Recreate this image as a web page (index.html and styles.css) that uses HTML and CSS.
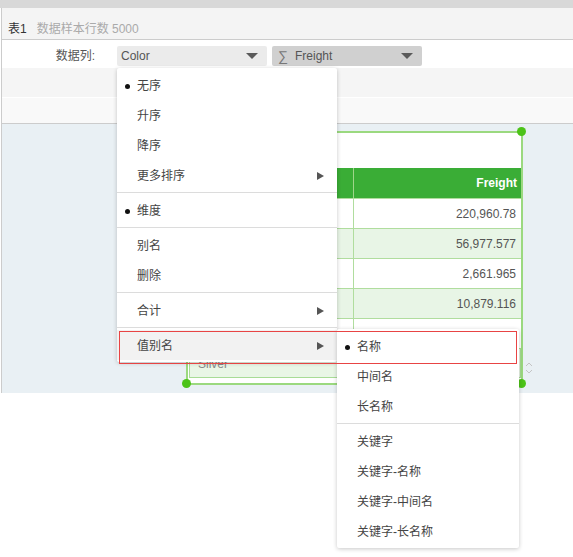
FILE: index.html
```html
<!DOCTYPE html>
<html>
<head>
<meta charset="utf-8">
<link rel="stylesheet" href="styles.css">
</head>
<body>
<div class="topbar"></div>
<div class="panel">
  <div class="tabbar"><span class="tab-name">表1</span><span class="tab-info">数据样本行数 5000</span></div>
  <div class="toolbar">
    <span class="tool-label">数据列:</span>
    <div class="select select-light"><span class="select-text">Color</span><span class="caret"></span></div>
    <div class="select select-dark"><span class="sigma">∑</span><span class="select-text">Freight</span><span class="caret"></span></div>
  </div>
  <div class="strip strip-a"></div>
  <div class="strip strip-b"></div>
  <div class="canvas">
    <div class="widget">
      <div class="widget-title"></div>
      <div class="grid">
        <div class="row head"><div class="cell c1">Color</div><div class="cell c2">Freight</div></div>
        <div class="row"><div class="cell c1">Black</div><div class="cell c2">220,960.78</div></div>
        <div class="row alt"><div class="cell c1">Blue</div><div class="cell c2">56,977.577</div></div>
        <div class="row"><div class="cell c1">Multi</div><div class="cell c2">2,661.965</div></div>
        <div class="row alt"><div class="cell c1">Red</div><div class="cell c2">10,879.116</div></div>
        <div class="row"><div class="cell c1">Grey</div><div class="cell c2">133,100.000</div></div>
        <div class="row selected"><div class="cell c1">Silver</div><div class="cell c2"></div></div>
      </div>
      <span class="handle h-tl"></span>
      <span class="handle h-tr"></span>
      <span class="handle h-bl"></span>
      <span class="handle h-br"></span>
    </div>
    <svg class="scroll-arrows" width="10" height="14" viewBox="0 0 10 14">
      <path d="M2 5 L5 2 L8 5" fill="none" stroke="#c4c4c4" stroke-width="1"/>
      <path d="M2 9 L5 12 L8 9" fill="none" stroke="#c4c4c4" stroke-width="1"/>
    </svg>
  </div>
</div>

<div class="menu main-menu">
  <div class="menu-group">
    <div class="menu-item checked">无序</div>
    <div class="menu-item">升序</div>
    <div class="menu-item">降序</div>
    <div class="menu-item has-sub">更多排序</div>
  </div>
  <div class="menu-group">
    <div class="menu-item checked">维度</div>
  </div>
  <div class="menu-group">
    <div class="menu-item">别名</div>
    <div class="menu-item">删除</div>
  </div>
  <div class="menu-group">
    <div class="menu-item has-sub">合计</div>
  </div>
  <div class="menu-group">
    <div class="menu-item has-sub active">值别名</div>
  </div>
</div>

<div class="menu sub-menu">
  <div class="menu-group">
    <div class="menu-item checked">名称</div>
    <div class="menu-item">中间名</div>
    <div class="menu-item">长名称</div>
  </div>
  <div class="menu-group">
    <div class="menu-item">关键字</div>
    <div class="menu-item">关键字-名称</div>
    <div class="menu-item">关键字-中间名</div>
    <div class="menu-item">关键字-长名称</div>
  </div>
</div>

<div class="highlight"></div>
</body>
</html>
```

FILE: styles.css
```css
* { box-sizing: border-box; }

html, body {
  margin: 0;
  padding: 0;
  background: #ffffff;
}

body {
  position: relative;
  width: 573px;
  height: 557px;
  overflow: hidden;
  font-family: "Liberation Sans", "Noto Sans CJK SC", sans-serif;
  font-size: 12px;
  color: #444;
}

.topbar {
  height: 8px;
  background: #d8d8d8;
}

.panel {
  margin-left: 1px;
  border-left: 1px solid #cccccc;
}

.tabbar {
  height: 32px;
  background: #f4f4f4;
  border-bottom: 1px solid #cccccc;
  padding: 14px 0 0 6px;
  line-height: 14px;
}

.tab-name {
  color: #333;
}

.tab-info {
  margin-left: 10px;
  color: #aaaaaa;
}

.toolbar {
  height: 28px;
  background: #ffffff;
  padding-top: 6px;
  display: flex;
  align-items: flex-start;
}

.tool-label {
  width: 93px;
  text-align: right;
  line-height: 20px;
  color: #555;
  margin-right: 22px;
}

.select {
  width: 150px;
  height: 20px;
  display: flex;
  align-items: center;
  padding: 0 9px 0 4px;
  border-radius: 2px;
  color: #555;
  font-size: 12px;
}

.select-light {
  background: #ebebeb;
}

.select-dark {
  background: #d0d0d0;
  margin-left: 5px;
  padding-left: 6px;
}

.select-text {
  flex: 1;
}

.sigma {
  color: #777;
  font-size: 14px;
  margin-right: 7px;
  line-height: 20px;
}

.caret {
  width: 0;
  height: 0;
  border-left: 6px solid transparent;
  border-right: 6px solid transparent;
  border-top: 6px solid #5a5a5a;
}

.strip-a {
  height: 29px;
  background: #f5f5f5;
}

.strip-b {
  height: 27px;
  background: #f9f9f9;
  border-top: 1px solid #ffffff;
  border-bottom: 1px solid #cccccc;
}

.canvas {
  position: relative;
  height: 269px;
  background: #e9f0f4;
}

.widget {
  position: absolute;
  left: 184px;
  top: 7px;
  width: 337px;
  height: 254px;
  border: 2px solid #9bd97f;
  background: #ffffff;
}

.widget-title {
  height: 35px;
}

.grid {
  display: flex;
  flex-direction: column;
}

.row {
  display: flex;
  height: 30px;
  border-top: 1px solid #b0dd9e;
  color: #555;
}

.row.alt {
  background: #e8f5e6;
}

.row.head {
  border-top: none;
  height: 30px;
  background: #3aad36;
  color: #ffffff;
  font-weight: bold;
}

.cell {
  display: flex;
  align-items: center;
}

.c1 {
  width: 166px;
  border-right: 1px solid #b0dd9e;
  padding-left: 8px;
}

.head .c1 {
  border-right-color: #9fd58a;
}

.c2 {
  flex: 1;
  justify-content: flex-end;
  padding-right: 5px;
}

.head .c2 {
  padding-right: 4px;
}

.row.selected {
  margin-left: 1px;
  height: 30px;
  border: 1px solid #a8dc96;
  background: #e9f6e6;
  color: #888;
}

.row.selected .c1 {
  border-right: none;
  padding-top: 2px;
}

.handle {
  position: absolute;
  width: 9px;
  height: 9px;
  border-radius: 50%;
  background: #4cc318;
}

.h-tl { left: -6px; top: -6px; }
.h-tr { left: 329px; top: -6px; }
.h-bl { left: -6px; top: 246px; }
.h-br { left: 329px; top: 246px; }

.scroll-arrows {
  position: absolute;
  left: 522px;
  top: 237px;
}

.menu {
  position: absolute;
  background: #ffffff;
  box-shadow: 0 1px 4px rgba(0, 0, 0, 0.22);
  border-radius: 2px;
}

.main-menu {
  left: 117px;
  top: 68px;
  width: 220px;
}

.sub-menu {
  left: 337px;
  top: 329px;
  width: 182px;
}

.menu-group {
  padding: 2px 0;
}

.menu-group + .menu-group {
  border-top: 1px solid #dcdcdc;
}

.menu-item {
  position: relative;
  height: 30px;
  line-height: 28px;
  padding-top: 2px;
  padding-left: 20px;
  color: #444;
  white-space: nowrap;
}

.menu-item.checked::before {
  content: "";
  position: absolute;
  left: 8px;
  top: 14px;
  width: 5px;
  height: 5px;
  border-radius: 50%;
  background: #111;
}

.menu-item.has-sub::after {
  content: "";
  position: absolute;
  right: 13px;
  top: 12px;
  width: 0;
  height: 0;
  border-top: 4px solid transparent;
  border-bottom: 4px solid transparent;
  border-left: 7px solid #555;
}

.menu-item.active {
  background: #f2f2f2;
}

.highlight {
  position: absolute;
  left: 119px;
  top: 331px;
  width: 398px;
  height: 33px;
  border: 1px solid #e84444;
  pointer-events: none;
}
```
